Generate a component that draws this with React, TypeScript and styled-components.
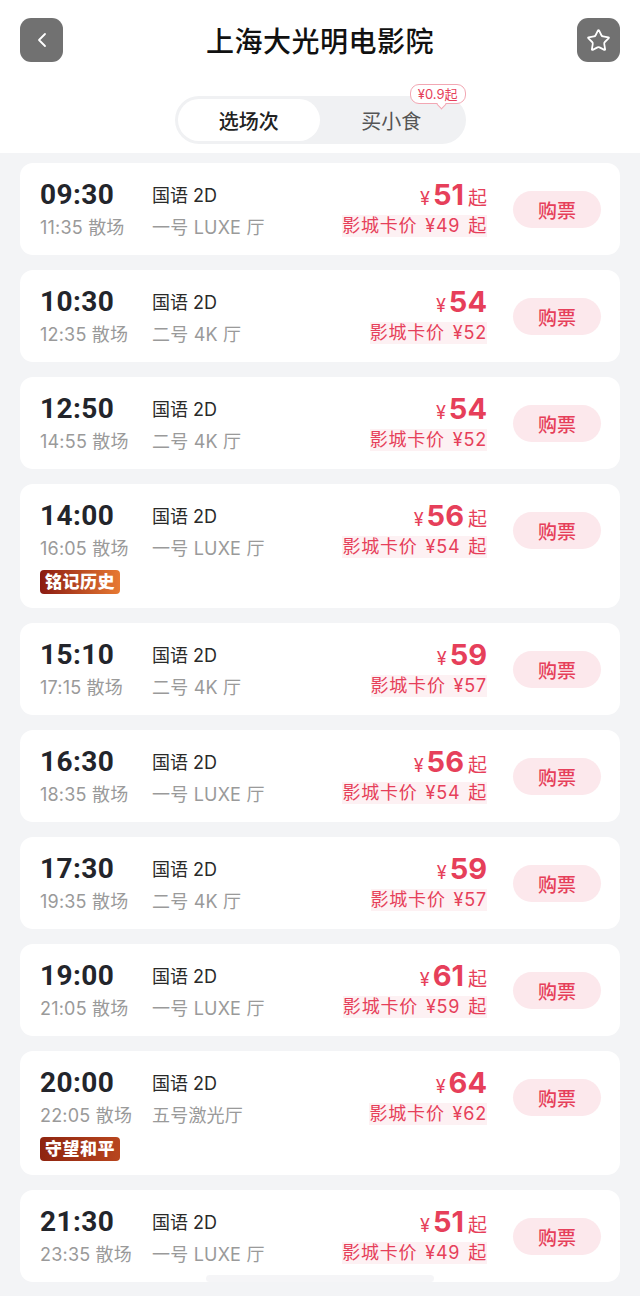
import React from 'react'
import styled, { createGlobalStyle } from 'styled-components'
import { ChevronLeft, Star } from 'lucide-react'

const RED = '#e63f5a'

const GlobalStyle = createGlobalStyle`
  body {
    margin: 0;
    background: #f3f4f6;
    font-family: "Inter", "Noto Sans CJK SC", sans-serif;
    color: #222;
  }
`

const Page = styled.div`
  width: 640px;
  min-height: 1296px;
  background: #f3f4f6;
`

const Header = styled.div`
  background: #fff;
  padding: 18px 20px 9px;
`

const TopBar = styled.div`
  display: flex;
  align-items: center;
  justify-content: space-between;
  height: 44px;
`

const IconButton = styled.div`
  width: 43px;
  height: 44px;
  border-radius: 11px;
  background: #717171;
  display: flex;
  align-items: center;
  justify-content: center;
  color: #fff;
`

const Title = styled.div`
  font-size: 28px;
  font-weight: 500;
  color: #111;
  letter-spacing: 0.5px;
`

const SegmentWrap = styled.div`
  display: flex;
  justify-content: center;
  margin-top: 34px;
`

const Segment = styled.div`
  position: relative;
  display: flex;
  width: 291px;
  height: 48px;
  padding: 3px;
  box-sizing: border-box;
  border-radius: 24px;
  background: #f0f1f3;
`

const SegItem = styled.div<{ $active?: boolean }>`
  flex: 1;
  display: flex;
  align-items: center;
  justify-content: center;
  border-radius: 21px;
  font-size: 20px;
  background: ${({ $active }) => ($active ? '#fff' : 'transparent')};
  color: ${({ $active }) => ($active ? '#222' : '#555')};
  font-weight: ${({ $active }) => ($active ? 500 : 400)};
`

const Bubble = styled.div`
  position: absolute;
  right: 0;
  top: -12px;
  height: 18px;
  padding: 0 7px;
  border: 1px solid #f2a7b3;
  border-radius: 9px;
  background: #fff;
  color: ${RED};
  font-size: 13px;
  line-height: 18px;

  &::after {
    content: '';
    position: absolute;
    left: 27px;
    bottom: -5px;
    width: 6px;
    height: 6px;
    background: #fff;
    border-right: 1px solid #f2a7b3;
    border-bottom: 1px solid #f2a7b3;
    transform: rotate(45deg);
  }
`

const List = styled.div`
  display: flex;
  flex-direction: column;
  gap: 15px;
  padding: 10px 20px 0;
`

const Card = styled.div`
  background: #fff;
  border-radius: 13px;
  padding: 14px 19px 14px 20px;
`

const MainRow = styled.div`
  display: flex;
  align-items: center;
`

const Info = styled.div`
  flex: 1;
  display: grid;
  grid-template-columns: 112px auto;
  grid-template-rows: 34px 30px;
  align-items: center;
`

const Time = styled.div`
  font-family: "Roboto", "Inter", sans-serif;
  font-size: 28px;
  font-weight: 700;
  color: #23252b;
  letter-spacing: 0.4px;
`

const Format = styled.div`
  font-size: 18px;
  color: #2a2a2a;
`

const Sub = styled.div`
  font-size: 18px;
  color: #9a9a9a;
  letter-spacing: 0.2px;
`

const PriceCol = styled.div`
  display: grid;
  grid-template-rows: 34px 30px;
  justify-items: end;
  align-items: center;
  color: ${RED};
`

const PriceLine = styled.div`
  display: flex;
  align-items: baseline;
  gap: 3px;
`

const Yen = styled.span`
  font-size: 18px;
`

const Amount = styled.span`
  font-size: 29px;
  font-weight: 700;
`

const Qi = styled.span`
  font-size: 19px;
  margin-left: 1px;
`

const CardPrice = styled.div`
  font-size: 18px;
  line-height: 22px;
  letter-spacing: 0.8px;
  word-spacing: 2px;
  background: #fdf1f3;
  color: ${RED};
`

const BuyButton = styled.div`
  margin-left: 26px;
  width: 88px;
  height: 37px;
  border-radius: 19px;
  background: #fce8ec;
  color: ${RED};
  font-size: 19px;
  font-weight: 500;
  display: flex;
  align-items: center;
  justify-content: center;
`

const Badge = styled.div<{ $from: string; $to: string }>`
  display: inline-block;
  margin-top: 8px;
  height: 24px;
  padding: 0 5px;
  border-radius: 4px;
  background: linear-gradient(90deg, ${({ $from }) => $from}, ${({ $to }) => $to});
  color: #fff;
  font-size: 17px;
  font-weight: 900;
  line-height: 24px;
  letter-spacing: 0.5px;
`

const HomeBar = styled.div`
  position: fixed;
  left: 206px;
  top: 1275px;
  width: 228px;
  height: 7px;
  border-radius: 4px;
  background: rgba(236, 237, 240, 0.55);
`

type Show = {
  start: string
  end: string
  hall: string
  price: string
  card: string
  from?: boolean
  badge?: { text: string; from: string; to: string }
}

const shows: Show[] = [
  { start: '09:30', end: '11:35', hall: '一号 LUXE 厅', price: '51', card: '49', from: true },
  { start: '10:30', end: '12:35', hall: '二号 4K 厅', price: '54', card: '52' },
  { start: '12:50', end: '14:55', hall: '二号 4K 厅', price: '54', card: '52' },
  {
    start: '14:00', end: '16:05', hall: '一号 LUXE 厅', price: '56', card: '54', from: true,
    badge: { text: '铭记历史', from: '#8a1a12', to: '#e87a32' },
  },
  { start: '15:10', end: '17:15', hall: '二号 4K 厅', price: '59', card: '57' },
  { start: '16:30', end: '18:35', hall: '一号 LUXE 厅', price: '56', card: '54', from: true },
  { start: '17:30', end: '19:35', hall: '二号 4K 厅', price: '59', card: '57' },
  { start: '19:00', end: '21:05', hall: '一号 LUXE 厅', price: '61', card: '59', from: true },
  {
    start: '20:00', end: '22:05', hall: '五号激光厅', price: '64', card: '62',
    badge: { text: '守望和平', from: '#8e2410', to: '#b8461e' },
  },
  { start: '21:30', end: '23:35', hall: '一号 LUXE 厅', price: '51', card: '49', from: true },
]

const App = () => {
  return (
    <Page>
      <GlobalStyle />
      <Header>
        <TopBar>
          <IconButton>
            <ChevronLeft size={24} strokeWidth={1.8} />
          </IconButton>
          <Title>上海大光明电影院</Title>
          <IconButton>
            <Star size={25} strokeWidth={1.7} />
          </IconButton>
        </TopBar>
        <SegmentWrap>
          <Segment>
            <SegItem $active>选场次</SegItem>
            <SegItem>买小食</SegItem>
            <Bubble>¥0.9起</Bubble>
          </Segment>
        </SegmentWrap>
      </Header>

      <List>
        {shows.map((s) => (
          <Card key={s.start}>
            <MainRow>
              <Info>
                <Time>{s.start}</Time>
                <Format>国语 2D</Format>
                <Sub>{s.end} 散场</Sub>
                <Sub>{s.hall}</Sub>
              </Info>
              <PriceCol>
                <PriceLine>
                  <Yen>¥</Yen>
                  <Amount>{s.price}</Amount>
                  {s.from && <Qi>起</Qi>}
                </PriceLine>
                <CardPrice>影城卡价 ¥{s.card}{s.from ? ' 起' : ''}</CardPrice>
              </PriceCol>
              <BuyButton>购票</BuyButton>
            </MainRow>
            {s.badge && (
              <Badge $from={s.badge.from} $to={s.badge.to}>{s.badge.text}</Badge>
            )}
          </Card>
        ))}
      </List>
      <HomeBar />
    </Page>
  )
}

export default App
